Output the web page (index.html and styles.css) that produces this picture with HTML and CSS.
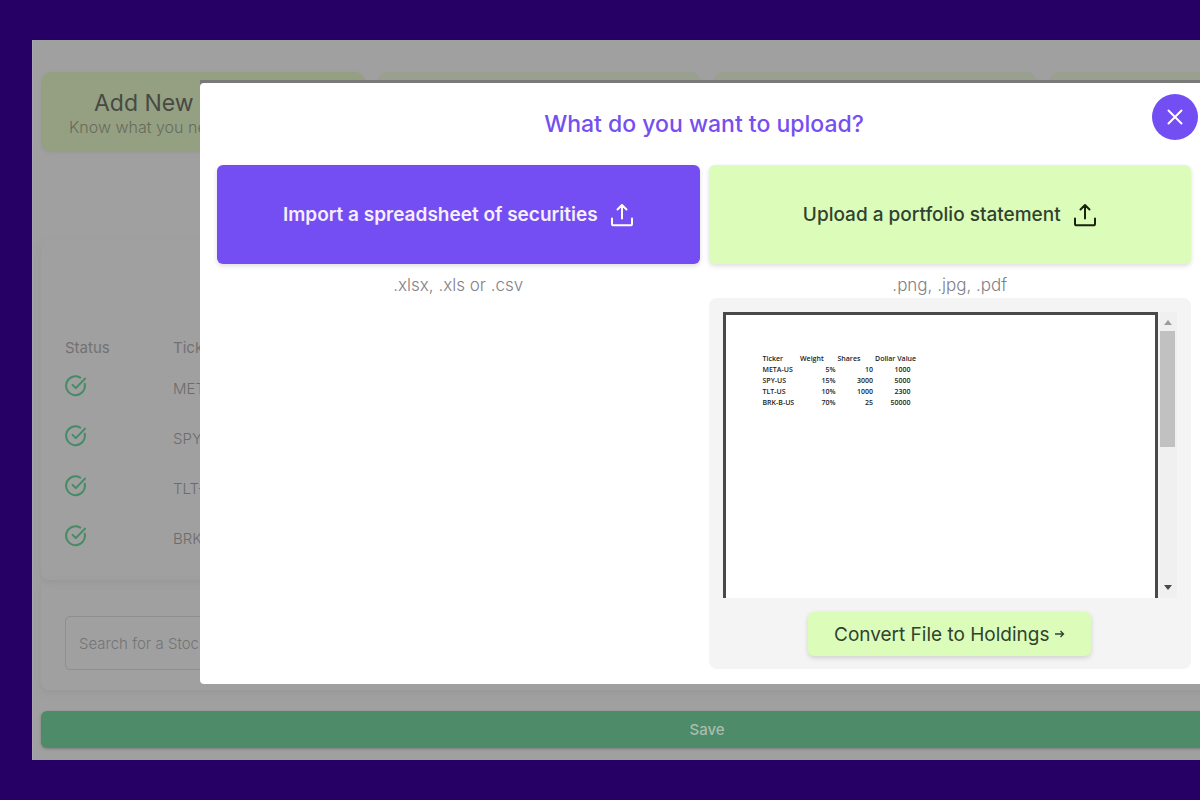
FILE: index.html
```html
<!DOCTYPE html>
<html lang="en">
<head>
<meta charset="utf-8">
<meta name="viewport" content="width=device-width, initial-scale=1">
<title>Upload holdings</title>
<link rel="stylesheet" href="styles.css">
</head>
<body>
<svg class="sprite" aria-hidden="true">
  <symbol id="check" viewBox="0 0 22 22"><path d="M19.7 8.8A9.4 9.4 0 1 1 15.2 2.6M7.6 9.9l3.2 3.2L20 3.6"/></symbol>
  <symbol id="upload" viewBox="0 0 24 24"><path d="M2 15.5v5.2q0 1.6 1.6 1.6h16.8q1.6 0 1.6-1.6v-5.2M12 15.5V2.5M7.5 6.5l4.5-4.5 4.5 4.5"/></symbol>
</svg>
<main class="app">
  <nav class="steps">
    <a class="step active" href="#new"><span class="step-title">Add New</span><span class="step-note">Know what you need</span></a>
    <a class="step" href="#two" aria-label="Step 2"></a>
    <a class="step" href="#three" aria-label="Step 3"></a>
    <a class="step" href="#four" aria-label="Step 4"></a>
  </nav>
  <section class="card holdings">
    <table class="holdings-table">
      <thead><tr><th class="status">Status</th><th>Ticker</th></tr></thead>
      <tbody>
        <tr><td><svg class="check"><use href="#check"/></svg></td><td>META-US</td></tr>
        <tr><td><svg class="check"><use href="#check"/></svg></td><td>SPY-US</td></tr>
        <tr><td><svg class="check"><use href="#check"/></svg></td><td>TLT-US</td></tr>
        <tr><td><svg class="check"><use href="#check"/></svg></td><td>BRK-B-US</td></tr>
      </tbody>
    </table>
  </section>
  <section class="card finder">
    <input class="search" type="text" placeholder="Search for a Stock" aria-label="Search for a Stock">
  </section>
  <button class="save" type="button">Save</button>

  <div class="modal-frame">
    <div class="modal" role="dialog" aria-labelledby="modal-title">
      <h2 class="modal-title" id="modal-title">What do you want to upload?</h2>
      <button class="close" type="button" aria-label="Close"><svg class="close-icon" viewBox="0 0 16 16"><path d="M1.5 1.5l13 13M14.5 1.5l-13 13"/></svg></button>
      <div class="choices">
        <div class="choice">
          <button class="big primary" type="button">Import a spreadsheet of securities <svg class="upload"><use href="#upload"/></svg></button>
          <p class="types">.xlsx, .xls or .csv</p>
        </div>
        <div class="choice">
          <button class="big lime" type="button">Upload a portfolio statement <svg class="upload dark"><use href="#upload"/></svg></button>
          <p class="types">.png, .jpg, .pdf</p>
          <div class="preview">
            <div class="viewer">
              <div class="paper">
                <table class="sheet">
                  <thead><tr><th>Ticker</th><th>Weight</th><th>Shares</th><th>Dollar Value</th></tr></thead>
                  <tbody>
                    <tr><td>META-US</td><td>5%</td><td>10</td><td>1000</td></tr>
                    <tr><td>SPY-US</td><td>15%</td><td>3000</td><td>5000</td></tr>
                    <tr><td>TLT-US</td><td>10%</td><td>1000</td><td>2300</td></tr>
                    <tr><td>BRK-B-US</td><td>70%</td><td>25</td><td>50000</td></tr>
                  </tbody>
                </table>
              </div>
              <div class="scrollbar">
                <svg class="arrow up" viewBox="0 0 8 5"><path d="M0 5l4-5 4 5z"/></svg>
                <div class="thumb"></div>
                <svg class="arrow down" viewBox="0 0 8 5"><path d="M0 0h8l-4 5z"/></svg>
              </div>
            </div>
            <button class="convert" type="button">Convert File to Holdings <svg class="go" viewBox="0 0 10 10"><path d="M0 5h8.5M5.5 2l3 3-3 3"/></svg></button>
          </div>
        </div>
      </div>
    </div>
  </div>
</main>
</body>
</html>
```
FILE: styles.css
```css
* { box-sizing: border-box; }
body {
  margin: 0;
  padding: 40px 0 40px 32px;
  min-height: 100vh;
  overflow: hidden;
  background: #270065;
  font-family: Inter, "Open Sans", sans-serif;
  font-size: 15px;
}
button { font: inherit; border: 0; cursor: pointer; }
.sprite { position: absolute; width: 0; height: 0; }

/* The dashboard runs past the right edge of the window. */
.app {
  position: relative;
  display: flex;
  flex-direction: column;
  min-height: 720px;
  margin-right: -182px;
  padding: 32px 9px 12px 8px;
  background: #a0a0a0;
  border-left: 1px solid #aaa6b4;
}
.steps {
  display: grid;
  grid-template-columns: repeat(4, 1fr);
  gap: 12px;
}
.step {
  height: 80px;
  border-radius: 10px;
  background: #9aa08f;
  text-decoration: none;
}
.step.active {
  display: flex;
  flex-direction: column;
  padding: 18px 28px;
  background: #95a083;
  box-shadow: 0 1px 3px #999;
}
.step-title { padding-left: 25px; font-size: 23px; line-height: 26px; color: #454a42; }
.step-note { font-size: 16px; line-height: 22px; color: #656c5c; font-weight: 300; white-space: nowrap; }
.card {
  padding: 0 24px;
  border-radius: 8px;
  box-shadow: 0 3px 6px #989898;
}
.holdings { margin-top: 88px; padding-top: 92px; padding-bottom: 17px; }
.finder { padding-top: 36px; padding-bottom: 20px; }
.holdings-table { border-collapse: collapse; color: #6c6c6c; font-weight: 300; text-align: left; }
.holdings-table th { padding: 0; height: 31px; font-weight: 400; color: #727272; }
.holdings-table td { padding: 0; height: 50px; vertical-align: middle; }
.holdings-table .status { width: 108px; }
.check { display: block; width: 22px; height: 22px; margin-bottom: 4px; fill: none; stroke: #468a66; stroke-width: 2; stroke-linecap: round; stroke-linejoin: round; }
.search {
  display: block;
  width: 100%;
  height: 54px;
  padding: 0 13px;
  border: 1px solid #8e8e8e;
  border-radius: 5px;
  background: transparent;
  font: inherit;
  font-weight: 300;
}
.search::placeholder { color: #747474; opacity: 1; }
.save {
  height: 37px;
  margin-top: auto;
  border-radius: 6px;
  background: #4e8b69;
  box-shadow: 0 1px 3px #7c7c7c;
  color: #a9bdb0;
  font-weight: 500;
}

.modal-frame {
  position: absolute;
  top: 40px;
  left: 167px;
  right: 174px;
  padding-top: 3px;
  background: #777a76;
  border-radius: 0 0 4px 4px;
}
.modal {
  position: relative;
  padding: 24px 17px 15px;
  border-radius: 4px;
  background: #fff;
}
.modal-title {
  margin: 0 0 24px;
  font-size: 23px;
  line-height: 34px;
  font-weight: 500;
  color: #754ff0;
  text-align: center;
}
.close {
  position: absolute;
  top: 11px;
  right: 10px;
  display: grid;
  place-items: center;
  width: 46px;
  height: 46px;
  padding: 0;
  border-radius: 50%;
  background: #734ef2;
}
.close-icon { width: 16px; height: 16px; fill: none; stroke: #fff; stroke-width: 2; stroke-linecap: round; }
.choices { display: grid; grid-template-columns: 1fr 1fr; gap: 9px; }
.choice { display: flex; flex-direction: column; }
.big {
  display: flex;
  align-items: center;
  justify-content: center;
  gap: 12px;
  height: 99px;
  border-radius: 6px;
  font-size: 19px;
  box-shadow: 0 2px 5px #ddd;
}
.primary { background: #744ef2; color: #f5efff; font-weight: 600; }
.lime { background: #dcfcba; color: #31422e; font-weight: 500; }
.upload { width: 24px; height: 24px; fill: none; stroke: #fff; stroke-width: 2; stroke-linejoin: round; stroke-linecap: round; }
.upload.dark { stroke: #17230f; }
.types { margin: 9px 0 1px; font-size: 17px; line-height: 24px; color: #828087; font-weight: 300; text-align: center; }
.preview {
  display: flex;
  flex-direction: column;
  align-items: center;
  gap: 14px;
  padding: 14px 14px 13px;
  border-radius: 8px;
  background: #f4f4f4;
}
.viewer { display: flex; align-self: stretch; height: 286px; gap: 2px; }
.paper {
  flex: 1;
  padding: 38px 37px;
  border: 3px solid #484a49;
  border-bottom: 0;
  background: #fff;
}
.sheet {
  border-collapse: collapse;
  table-layout: fixed;
  width: 150px;
  font-family: "Open Sans", sans-serif;
  font-size: 7px;
  line-height: 11px;
  color: #1c1c1c;
  text-align: right;
}
.sheet th { padding: 0; font-weight: 600; text-align: left; white-space: nowrap; }
.sheet td { padding: 0 2px 0 0; font-weight: 600; white-space: nowrap; }
.sheet td:first-child { text-align: left; }
.scrollbar {
  display: flex;
  flex-direction: column;
  align-items: center;
  width: 17px;
  padding: 8px 2px 8px 0;
  background: #f0f0f0;
}
.arrow { width: 8px; height: 5px; }
.up { fill: #9b9b9b; }
.down { margin-top: auto; fill: #484848; }
.thumb { width: 15px; height: 116px; margin-top: 6px; background: #c1c1c1; }
.convert {
  display: flex;
  align-items: center;
  gap: 6px;
  height: 44px;
  padding: 0 26px;
  border-radius: 6px;
  background: #dcfdba;
  box-shadow: 0 2px 5px #d0d0d0;
  color: #31422e;
  font-size: 19px;
}
.go { width: 10px; height: 10px; fill: none; stroke: #31422e; stroke-width: 1.3; }
```
